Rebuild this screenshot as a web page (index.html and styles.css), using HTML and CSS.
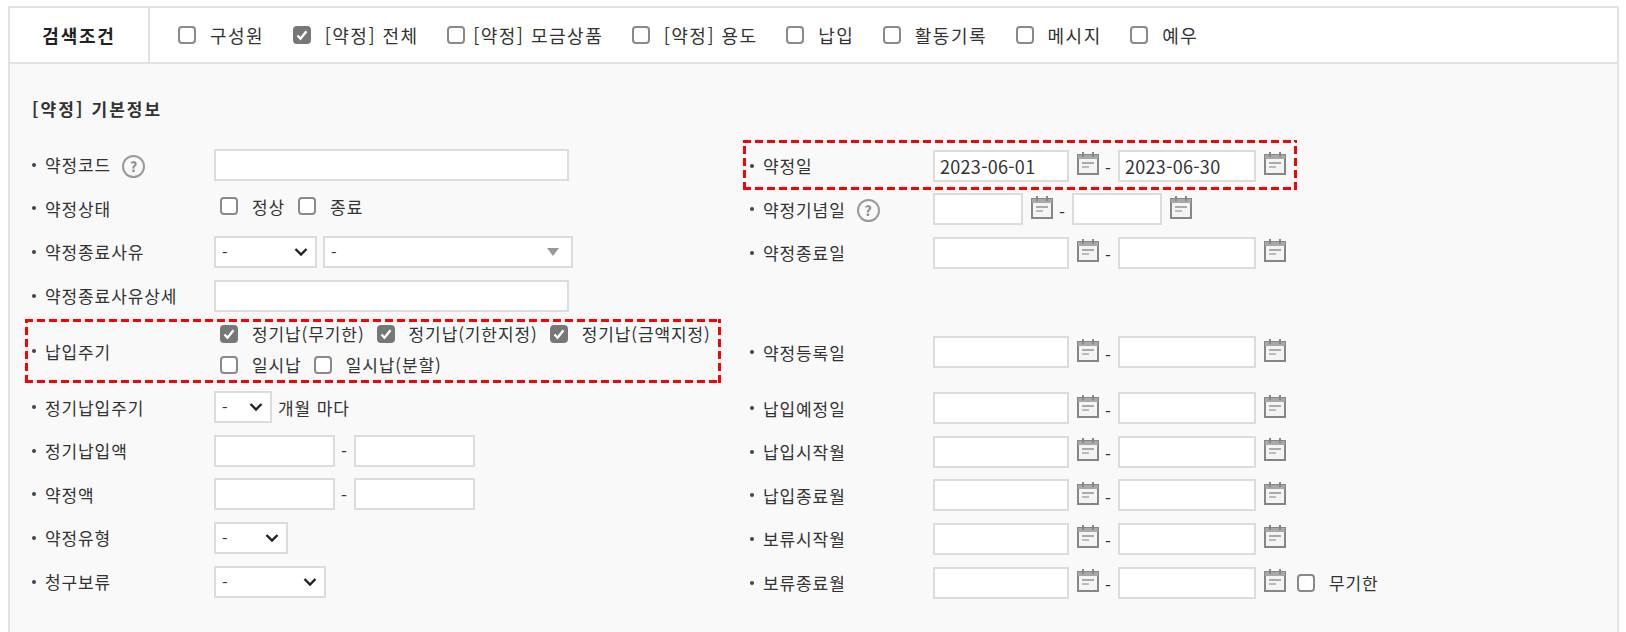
FILE: index.html
```html
<!DOCTYPE html>
<html lang="ko">
<head>
    <meta charset="UTF-8">
    <title>검색조건</title>
    <link rel="stylesheet" href="styles.css">
</head>
<body>
    <svg class="sprite" width="0" height="0">
        <symbol id="cal" viewBox="0 0 22 24">
            <path d="M1 4h20v19H1z" fill="#f4f4f4" stroke="#868686" stroke-width="2"/>
            <path d="M1 4h20v4H1z" fill="#a8a8a8"/>
            <path d="M6 1v5M16 1v5" stroke="#868686" stroke-width="2"/>
            <path d="M5 12h12" stroke="#aaa" stroke-width="2"/>
            <path d="M5 16h7" stroke="#bbb" stroke-width="2"/>
        </symbol>
    </svg>
    <div class="panel">
        <div class="search-head">
            <div class="search-title">검색조건</div>
            <div class="search-opts">
                <label class="chk"><input type="checkbox"><span>구성원</span></label>
                <label class="chk"><input type="checkbox" checked><span>[약정] 전체</span></label>
                <label class="chk tight"><input type="checkbox"><span>[약정] 모금상품</span></label>
                <label class="chk"><input type="checkbox"><span>[약정] 용도</span></label>
                <label class="chk"><input type="checkbox"><span>납입</span></label>
                <label class="chk"><input type="checkbox"><span>활동기록</span></label>
                <label class="chk"><input type="checkbox"><span>메시지</span></label>
                <label class="chk"><input type="checkbox"><span>예우</span></label>
            </div>
        </div>
        <div class="search-body">
            <h3 class="section-title">[약정] 기본정보</h3>

            <div class="row">
                <div class="cell left">
                    <div class="lbl">약정코드 <span class="help">?</span></div>
                    <input type="text" class="inp wide">
                </div>
                <div class="cell right">
                    <div class="lbl">약정일</div>
                    <input type="text" class="inp date" value="2023-06-01">
                    <svg class="cal"><use href="#cal"/></svg>
                    <span class="dash">-</span>
                    <input type="text" class="inp date" value="2023-06-30">
                    <svg class="cal"><use href="#cal"/></svg>
                </div>
            </div>

            <div class="row">
                <div class="cell left">
                    <div class="lbl">약정상태</div>
                    <div class="checks">
                        <label class="chk"><input type="checkbox"><span>정상</span></label>
                        <label class="chk"><input type="checkbox"><span>종료</span></label>
                    </div>
                </div>
                <div class="cell right">
                    <div class="lbl">약정기념일 <span class="help">?</span></div>
                    <input type="text" class="inp date-sm">
                    <svg class="cal"><use href="#cal"/></svg>
                    <span class="dash">-</span>
                    <input type="text" class="inp date-sm">
                    <svg class="cal"><use href="#cal"/></svg>
                </div>
            </div>

            <div class="row">
                <div class="cell left">
                    <div class="lbl">약정종료사유</div>
                    <select class="sel sel-reason"><option>-</option></select>
                    <select class="sel combo"><option>-</option></select>
                </div>
                <div class="cell right">
                    <div class="lbl">약정종료일</div>
                    <input type="text" class="inp date">
                    <svg class="cal"><use href="#cal"/></svg>
                    <span class="dash">-</span>
                    <input type="text" class="inp date">
                    <svg class="cal"><use href="#cal"/></svg>
                </div>
            </div>

            <div class="row">
                <div class="cell left">
                    <div class="lbl">약정종료사유상세</div>
                    <input type="text" class="inp wide">
                </div>
                <div class="cell right"></div>
            </div>

            <div class="row tall">
                <div class="cell left">
                    <div class="lbl">납입주기</div>
                    <div class="checks multi">
                        <label class="chk"><input type="checkbox" checked><span>정기납(무기한)</span></label>
                        <label class="chk"><input type="checkbox" checked><span>정기납(기한지정)</span></label>
                        <label class="chk"><input type="checkbox" checked><span>정기납(금액지정)</span></label>
                        <label class="chk"><input type="checkbox"><span>일시납</span></label>
                        <label class="chk"><input type="checkbox"><span>일시납(분할)</span></label>
                    </div>
                </div>
                <div class="cell right">
                    <div class="lbl">약정등록일</div>
                    <input type="text" class="inp date">
                    <svg class="cal"><use href="#cal"/></svg>
                    <span class="dash">-</span>
                    <input type="text" class="inp date">
                    <svg class="cal"><use href="#cal"/></svg>
                </div>
            </div>

            <div class="row">
                <div class="cell left">
                    <div class="lbl">정기납입주기</div>
                    <select class="sel sel-month"><option>-</option></select>
                    <span class="unit">개월 마다</span>
                </div>
                <div class="cell right">
                    <div class="lbl">납입예정일</div>
                    <input type="text" class="inp date">
                    <svg class="cal"><use href="#cal"/></svg>
                    <span class="dash">-</span>
                    <input type="text" class="inp date">
                    <svg class="cal"><use href="#cal"/></svg>
                </div>
            </div>

            <div class="row">
                <div class="cell left">
                    <div class="lbl">정기납입액</div>
                    <input type="text" class="inp amount">
                    <span class="dash amount-dash">-</span>
                    <input type="text" class="inp amount">
                </div>
                <div class="cell right">
                    <div class="lbl">납입시작월</div>
                    <input type="text" class="inp date">
                    <svg class="cal"><use href="#cal"/></svg>
                    <span class="dash">-</span>
                    <input type="text" class="inp date">
                    <svg class="cal"><use href="#cal"/></svg>
                </div>
            </div>

            <div class="row">
                <div class="cell left">
                    <div class="lbl">약정액</div>
                    <input type="text" class="inp amount">
                    <span class="dash amount-dash">-</span>
                    <input type="text" class="inp amount">
                </div>
                <div class="cell right">
                    <div class="lbl">납입종료월</div>
                    <input type="text" class="inp date">
                    <svg class="cal"><use href="#cal"/></svg>
                    <span class="dash">-</span>
                    <input type="text" class="inp date">
                    <svg class="cal"><use href="#cal"/></svg>
                </div>
            </div>

            <div class="row">
                <div class="cell left">
                    <div class="lbl">약정유형</div>
                    <select class="sel sel-type"><option>-</option></select>
                </div>
                <div class="cell right">
                    <div class="lbl">보류시작월</div>
                    <input type="text" class="inp date">
                    <svg class="cal"><use href="#cal"/></svg>
                    <span class="dash">-</span>
                    <input type="text" class="inp date">
                    <svg class="cal"><use href="#cal"/></svg>
                </div>
            </div>

            <div class="row">
                <div class="cell left">
                    <div class="lbl">청구보류</div>
                    <select class="sel sel-hold"><option>-</option></select>
                </div>
                <div class="cell right">
                    <div class="lbl">보류종료월</div>
                    <input type="text" class="inp date">
                    <svg class="cal"><use href="#cal"/></svg>
                    <span class="dash">-</span>
                    <input type="text" class="inp date">
                    <svg class="cal"><use href="#cal"/></svg>
                    <label class="chk endless"><input type="checkbox"><span>무기한</span></label>
                </div>
            </div>
        </div>

        <div class="mark mark-date"></div>
        <div class="mark mark-cycle"></div>
    </div>
</body>
</html>
```

FILE: styles.css
```css
* {
    margin: 0;
    padding: 0;
    box-sizing: border-box;
}

body {
    font-family: "Noto Sans CJK KR", "Noto Sans", sans-serif;
    font-size: 17px;
    letter-spacing: 0.9px;
    color: #333;
    background-color: #fff;
    overflow: hidden;
}

.sprite {
    position: absolute;
}

.panel {
    position: relative;
    margin: 6px 7px 0 8px;
    height: 626px;
    border: 2px solid #e2e2e2;
    border-bottom: none;
}

/* search header */
.search-head {
    display: flex;
    height: 56px;
    background-color: #fff;
    border-bottom: 2px solid #e2e2e2;
}

.search-title {
    width: 140px;
    border-right: 2px solid #e2e2e2;
    font-size: 18px;
    font-weight: 700;
    letter-spacing: 1.8px;
    line-height: 54px;
    text-align: center;
    color: #222;
}

.search-opts {
    display: flex;
    align-items: center;
    gap: 28.5px;
    padding-left: 28px;
    font-size: 18px;
    letter-spacing: 1.5px;
}

/* checkboxes */
.chk {
    display: inline-flex;
    align-items: center;
    gap: 14px;
    white-space: nowrap;
}

.chk.tight {
    gap: 8px;
}

.chk input {
    appearance: none;
    width: 18px;
    height: 18px;
    background-color: #fff;
    border: 2px solid #8a8a8a;
    border-radius: 4px;
}

.chk input:checked {
    background: #777 url("data:image/svg+xml,%3Csvg xmlns='http://www.w3.org/2000/svg' viewBox='0 0 14 14'%3E%3Cpath d='M2.5 7.5l3 3.2 6-7.5' fill='none' stroke='%23fff' stroke-width='2.4'/%3E%3C/svg%3E") center / 14px no-repeat;
    border-color: #777;
}

/* form body */
.search-body {
    height: 568px;
    padding: 32px 0 0 22px;
    background-color: #f9f9f9;
}

.section-title {
    height: 47px;
    font-size: 17px;
    font-weight: 700;
    letter-spacing: 2.1px;
    color: #333;
}

.row {
    display: flex;
    height: 43.6px;
}

.row.tall {
    height: 68px;
}

.cell {
    display: flex;
    align-items: center;
}

.cell.left {
    width: 718px;
}

.cell.right {
    padding-top: 2px;
}

.cell.left .lbl {
    width: 182px;
}

.lbl {
    display: flex;
    align-items: center;
    width: 183px;
    flex-shrink: 0;
    gap: 8px;
}

.lbl::before {
    content: "";
    width: 4px;
    height: 4px;
    margin-right: 1px;
    border-radius: 50%;
    background-color: #444;
}

.help {
    width: 23px;
    height: 23px;
    margin: 3px 0 0 3px;
    border: 2px solid #9a9a9a;
    border-radius: 50%;
    font-size: 14px;
    font-weight: 700;
    letter-spacing: 0;
    line-height: 19px;
    text-align: center;
    color: #8a8a8a;
}

/* inputs */
.inp,
.sel {
    height: 32px;
    font-family: inherit;
    font-size: 18px;
    letter-spacing: 0.3px;
    color: #333;
    background-color: #fff;
    border: 2px solid #dcdcdc;
    outline: none;
}

.inp {
    padding: 0 5px;
}

.inp.wide {
    width: 355px;
}

.inp.date {
    width: 136px;
}

.cal + .dash + .inp.date {
    width: 138px;
}

.inp.date-sm {
    width: 90px;
}

.inp.amount {
    width: 121px;
}

.sel {
    appearance: none;
    padding-left: 6px;
    font-size: 16px;
    background: #fff url("data:image/svg+xml,%3Csvg xmlns='http://www.w3.org/2000/svg' viewBox='0 0 14 10'%3E%3Cpath d='M1.5 2l5.5 5.5L12.5 2' fill='none' stroke='%23222' stroke-width='2.4'/%3E%3C/svg%3E") right 7px center / 14px 10px no-repeat;
}

.sel-reason {
    width: 103px;
}

.sel.combo {
    width: 250px;
    margin-left: 6px;
    background: #fff url("data:image/svg+xml,%3Csvg xmlns='http://www.w3.org/2000/svg' viewBox='0 0 12 8'%3E%3Cpath d='M0 0h12L6 8z' fill='%23999'/%3E%3C/svg%3E") right 12px center / 12px 8px no-repeat;
}

.sel-month {
    width: 58px;
}

.sel-type {
    width: 74px;
}

.sel-hold {
    width: 112px;
}

.unit {
    margin-left: 6px;
}

.dash {
    width: 19px;
    margin-top: 4px;
    text-align: center;
}

.amount-dash {
    margin-top: 0;
}

.cal {
    width: 22px;
    height: 24px;
    margin: -5px 0 0 8px;
}

.checks {
    display: flex;
    gap: 13px;
    margin-top: -4px;
    padding-left: 6px;
}

.checks.multi {
    flex-wrap: wrap;
    width: 510px;
    gap: 6px 12px;
}

.endless {
    margin-left: 11px;
}

/* red annotation boxes */
.mark {
    position: absolute;
    background:
        repeating-linear-gradient(90deg, #f00 0 8px, transparent 8px 12px) left top / 100% 3px no-repeat,
        repeating-linear-gradient(90deg, #f00 0 8px, transparent 8px 12px) left bottom / 100% 3px no-repeat,
        repeating-linear-gradient(0deg, #f00 0 8px, transparent 8px 12px) left top / 3px 100% no-repeat,
        repeating-linear-gradient(0deg, #f00 0 8px, transparent 8px 12px) right top / 3px 100% no-repeat;
}

.mark-date {
    left: 733px;
    top: 132px;
    width: 554px;
    height: 50px;
}

.mark-cycle {
    left: 15px;
    top: 311px;
    width: 696px;
    height: 64px;
}
```
